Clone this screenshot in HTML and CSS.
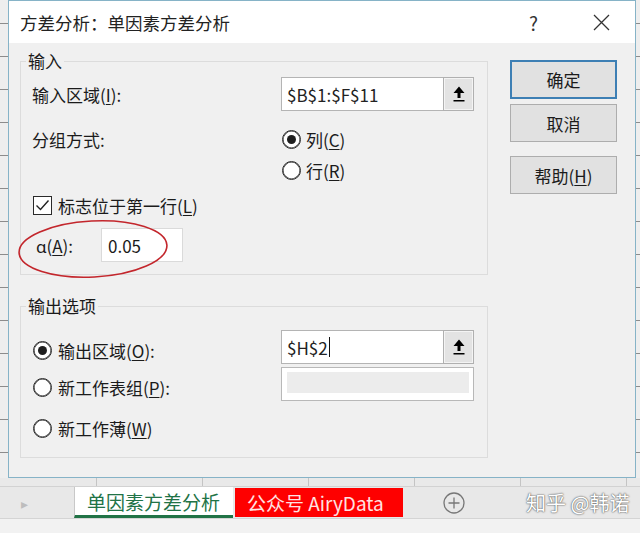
FILE: index.html
```html
<!DOCTYPE html>
<html lang="zh-CN">
<head>
    <meta charset="UTF-8">
    <meta name="viewport" content="width=device-width, initial-scale=1.0">
    <title>方差分析：单因素方差分析</title>
    <link rel="stylesheet" href="styles.css">
</head>
<body>
    <div class="workspace">
        <div class="edge edge-left"></div>

        <div class="dialog">
            <div class="titlebar">
                <span class="title">方差分析：单因素方差分析</span>
                <span class="help-mark">?</span>
                <svg class="close" width="17" height="17" viewBox="0 0 17 17">
                    <path d="M1 1 L16 16 M16 1 L1 16" stroke="#333" stroke-width="1.3" fill="none"/>
                </svg>
            </div>

            <div class="dialog-body">
                <div class="main">
                    <fieldset class="group">
                        <legend>输入</legend>
                        <div class="row row-tall first">
                            <span class="label">输入区域(<u>I</u>):</span>
                            <div class="ref-input">
                                <span class="ref-text">$B$1:$F$11</span>
                                <span class="ref-btn">
                                    <svg width="12" height="16" viewBox="0 0 12 16">
                                        <path d="M6 0.5 L11.5 7 H7.5 V12 H4.5 V7 H0.5 Z" fill="#000"/>
                                        <rect x="0.5" y="14" width="11" height="1.5" fill="#000"/>
                                    </svg>
                                </span>
                            </div>
                        </div>
                        <div class="row row-gap">
                            <span class="label">分组方式:</span>
                            <label class="option"><span class="radio checked"></span><span>列(<u>C</u>)</span></label>
                        </div>
                        <div class="row">
                            <span class="label"></span>
                            <label class="option"><span class="radio"></span><span>行(<u>R</u>)</span></label>
                        </div>
                        <div class="row row-check">
                            <label class="option"><span class="checkbox">
                                <svg width="15" height="13" viewBox="0 0 15 13">
                                    <path d="M1.5 6.5 L5.5 10.5 L13.5 1.5" stroke="#222" stroke-width="1.4" fill="none"/>
                                </svg>
                            </span><span>标志位于第一行(<u>L</u>)</span></label>
                        </div>
                        <div class="row row-tall row-alpha">
                            <span class="alpha-label"><span class="latin">ɑ</span>(<u>A</u>):</span>
                            <span class="small-input">0.05</span>
                        </div>
                    </fieldset>

                    <fieldset class="group group-out">
                        <legend>输出选项</legend>
                        <div class="row row-tall first">
                            <label class="option label"><span class="radio checked"></span><span>输出区域(<u>O</u>):</span></label>
                            <div class="ref-input">
                                <span class="ref-text">$H$2<span class="caret"></span></span>
                                <span class="ref-btn">
                                    <svg width="12" height="16" viewBox="0 0 12 16">
                                        <path d="M6 0.5 L11.5 7 H7.5 V12 H4.5 V7 H0.5 Z" fill="#000"/>
                                        <rect x="0.5" y="14" width="11" height="1.5" fill="#000"/>
                                    </svg>
                                </span>
                            </div>
                        </div>
                        <div class="row row-tall row-sheet">
                            <label class="option label"><span class="radio"></span><span>新工作表组(<u>P</u>):</span></label>
                            <div class="disabled-input"><span></span></div>
                        </div>
                        <div class="row row-tall row-book">
                            <label class="option label"><span class="radio"></span><span>新工作薄(<u>W</u>)</span></label>
                        </div>
                    </fieldset>
                </div>

                <div class="actions">
                    <button class="default">确定</button>
                    <button>取消</button>
                    <button class="help-btn">帮助(<u>H</u>)</button>
                </div>
            </div>

            <!-- red circle drawn on the screenshot -->
            <svg class="annot" width="160" height="66" viewBox="0 0 160 66">
                <ellipse cx="80" cy="33" rx="74" ry="28" transform="rotate(-3 80 33)" fill="none" stroke="#c3262c" stroke-width="1.6"/>
            </svg>
        </div>

        <div class="edge edge-right"></div>
    </div>

    <div class="sheet-strip"></div>

    <div class="tabbar">
        <span class="nav-arrow">&#9656;</span>
        <span class="tab active">单因素方差分析</span>
        <span class="tab red">公众号 AiryData</span>
        <span class="add-sheet">
            <svg width="22" height="22" viewBox="0 0 22 22">
                <circle cx="11" cy="11" r="10" stroke="#777" stroke-width="1.3" fill="none"/>
                <path d="M11 5.5 V16.5 M5.5 11 H16.5" stroke="#777" stroke-width="1.3"/>
            </svg>
        </span>
        <span class="watermark">知乎 @韩诺</span>
    </div>

    <div class="status"></div>
</body>
</html>
```

FILE: styles.css
```css
* {
    box-sizing: border-box;
    margin: 0;
    padding: 0;
}

body {
    width: 640px;
    height: 533px;
    overflow: hidden;
    font-family: "Noto Sans CJK SC", "Noto Sans", sans-serif;
    font-size: 17px;
    color: #1b1b1b;
    background: #e9e9e9;
}

u {
    text-decoration-thickness: 1px;
    text-underline-offset: 2px;
}

.workspace {
    display: flex;
    height: 478px;
}

.edge {
    background-color: #eeeeee;
    background-image: repeating-linear-gradient(to bottom, transparent 0 23px, #8c8c8c 23px 24px, transparent 24px 33px);
}

.edge-left {
    width: 8px;
}

.edge-right {
    width: 4px;
}

/* Dialog */
.dialog {
    position: relative;
    width: 628px;
    display: flex;
    flex-direction: column;
    background: #f0f0f0;
    border: 1px solid #86b3c7;
}

.titlebar {
    height: 42px;
    display: flex;
    align-items: center;
    padding-left: 11px;
    background: #ffffff;
}

.title {
    font-size: 17.5px;
    color: #222;
}

.help-mark {
    margin-left: auto;
    font-size: 19px;
    color: #333;
}

.close {
    margin-left: 55px;
    margin-right: 25px;
}

.dialog-body {
    display: flex;
    gap: 22px;
    padding: 7px 18px 0 11px;
}

.main {
    width: 468px;
}

.group {
    border: 1px solid #dcdcdc;
    padding: 0 11px 12px 11px;
}

.group legend {
    line-height: 22px;
    padding: 0 2px;
    margin-left: -6px;
}

.group-out {
    margin-top: 20px;
}

.row {
    display: flex;
    align-items: center;
    height: 31px;
}

.row-tall {
    height: 34px;
}

.first {
    margin-top: 5px;
}

.group-out .first {
    margin-top: 13px;
}

.row-gap {
    margin-top: 13px;
}

.row-check {
    margin-top: 4px;
}

.row-alpha {
    margin-top: 7px;
}

.row-sheet {
    margin-top: 3px;
}

.row-book {
    margin-top: 10px;
}

.label {
    width: 249px;
    flex-shrink: 0;
}

.option {
    display: flex;
    align-items: center;
    gap: 6px;
}

.group-out .option {
    padding-left: 1px;
    padding-top: 6px;
}

.group-out .row-book .option {
    padding-top: 0;
}

.radio {
    width: 19px;
    height: 19px;
    border-radius: 50%;
    border: 1px solid #2a2a2a;
    box-shadow: inset 0 0 0 0.6px #2a2a2a;
    background: #fff;
    display: flex;
    align-items: center;
    justify-content: center;
}

.radio.checked::after {
    content: "";
    width: 9px;
    height: 9px;
    border-radius: 50%;
    background: #1e1e1e;
}

.row-gap .option,
.row-gap + .row .option {
    margin-left: 1px;
    gap: 5px;
}

.checkbox {
    width: 19px;
    height: 19px;
    border: 1px solid #2a2a2a;
    background: #fff;
    display: flex;
    align-items: center;
    justify-content: center;
    margin-left: 1px;
}

.ref-input {
    width: 193px;
    height: 34px;
    display: flex;
    border: 1px solid #b4b4b4;
    background: #fff;
}

.ref-text {
    flex: 1;
    display: flex;
    align-items: center;
    padding-left: 5px;
    font-size: 17px;
    color: #222;
}

.caret {
    display: inline-block;
    width: 1px;
    height: 20px;
    margin-left: 1px;
    background: #111;
}

.ref-btn {
    width: 31px;
    margin: -1px -1px -1px 0;
    display: flex;
    align-items: center;
    justify-content: center;
    background: #e3e3e3;
    border: 1px solid #b0b0b0;
    box-shadow: inset 0 0 0 1px #f4f4f4;
}

.alpha-label {
    width: 69px;
    padding-left: 4px;
}

.latin {
    font-family: "Noto Sans", sans-serif;
}

.small-input {
    width: 82px;
    height: 34px;
    display: flex;
    align-items: center;
    padding-left: 6px;
    background: #fff;
    border: 1px solid #dadada;
}

.disabled-input {
    width: 193px;
    height: 34px;
    padding: 4px 4px 7px 5px;
    background: #fff;
    border: 1px solid #b8b8b8;
}

.disabled-input span {
    display: block;
    height: 100%;
    background: #ececec;
}

/* Buttons */
.actions {
    width: 107px;
    margin-top: 10px;
    display: flex;
    flex-direction: column;
}

.actions button {
    height: 38px;
    font-family: inherit;
    font-size: 17px;
    color: #1b1b1b;
    background: #e1e1e1;
    border: 1px solid #adadad;
}

.actions button + button {
    margin-top: 5px;
}

.actions .default {
    height: 39px;
    border: 2px solid #3d7fb4;
}

.actions .help-btn {
    margin-top: 14px !important;
}

.annot {
    position: absolute;
    left: 4px;
    top: 215px;
}

/* Sheet area under the dialog */
.sheet-strip {
    height: 9px;
    background-color: #e9e9e9;
    background-image: repeating-linear-gradient(to right, transparent 0 96px, #c4c4c4 96px 97px, transparent 97px 106px);
    border-bottom: 1px solid #d2d2d2;
}

.tabbar {
    height: 31px;
    display: flex;
    align-items: stretch;
    background: #e8e8e8;
}

.nav-arrow {
    width: 74px;
    padding-left: 21px;
    display: flex;
    align-items: center;
    font-size: 14px;
    color: #bdbdbd;
}

.tab {
    display: flex;
    align-items: center;
    font-size: 19px;
}

.tab.active {
    width: 159px;
    padding-left: 12px;
    color: #217346;
    background: #ffffff;
    border-left: 1px solid #c8c8c8;
    border-bottom: 3px solid #217346;
}

.tab.red {
    width: 168px;
    margin: 1px 0 1px 2px;
    padding-left: 12px;
    color: #ffe2e2;
    background: #fe0000;
}

.add-sheet {
    display: flex;
    align-items: center;
    margin-left: 40px;
}

.watermark {
    display: flex;
    align-items: center;
    margin-left: 61px;
    font-size: 20px;
    color: #ffffff;
    text-shadow: 0 0 2px #555, 0 0 1px #555;
}

.status {
    height: 15px;
    background: #f2f2f2;
    border-top: 1px solid #d4d4d4;
}
```
